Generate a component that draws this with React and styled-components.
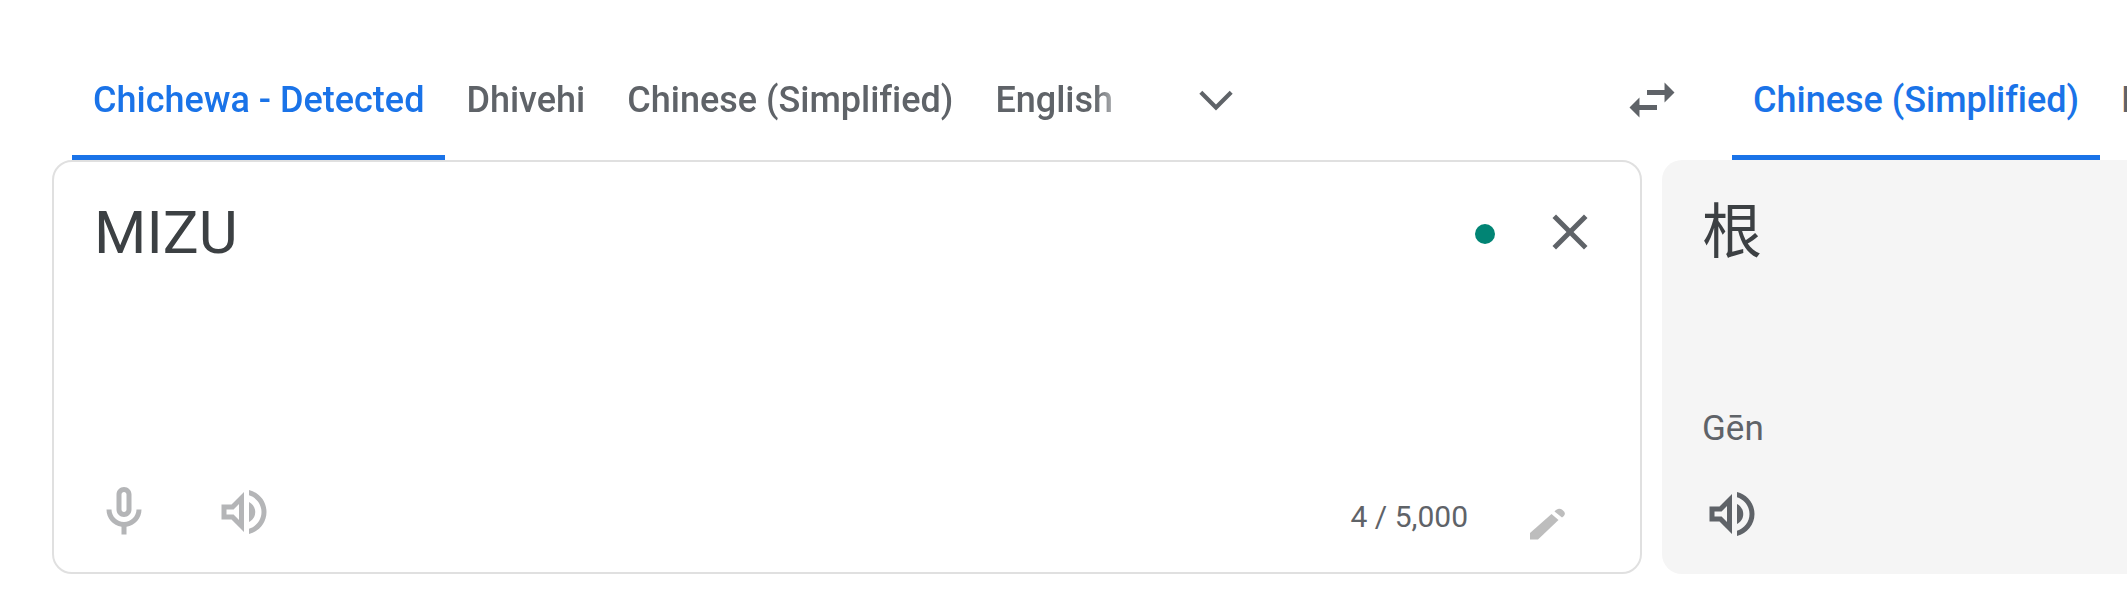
import React, { useState } from "react";
import styled, { createGlobalStyle } from "styled-components";

const GlobalStyle = createGlobalStyle`
  *, *::before, *::after { box-sizing: border-box; }
  body {
    margin: 0;
    background: #fff;
    color: #3c4043;
    font-family: Roboto, "Noto Sans CJK SC", sans-serif;
  }
  button, textarea { font: inherit; }
`;

const Page = styled.main`
  display: grid;
  grid-template-columns: minmax(0, 106fr) minmax(0, 31fr);
  column-gap: 20px;
  padding: 40px 0 36px 52px;
`;

const Column = styled.section`
  display: flex;
  flex-direction: column;
  min-width: 0;
`;

const LanguageBar = styled.div`
  display: flex;
  align-items: center;
  height: 120px;
  padding-left: ${(p) => (p.$wide ? 70 : 20)}px;
`;

const Tabs = styled.div`
  display: flex;
  align-self: stretch;
  overflow: hidden;
  ${(p) => p.$fade && "mask-image: linear-gradient(to left, transparent, #000 40px);"}
`;

const Tab = styled.button`
  flex: none;
  padding: 5px 21px 0;
  border: 0;
  border-bottom: 5px solid ${(p) => (p.$active ? "#1a73e8" : "transparent")};
  background: none;
  color: ${(p) => (p.$active ? "#1a73e8" : "#5f6368")};
  font-size: 36px;
  font-weight: 500;
  font-variant-ligatures: none;
  line-height: 50px;
  white-space: nowrap;
`;

const IconButton = styled.button`
  display: grid;
  place-items: center;
  flex: none;
  width: 60px;
  height: 60px;
  padding: 0;
  border: 0;
  background: none;
  color: #5f6368;
  &:disabled { color: #b4b5b7; }
`;

const MoreButton = styled(IconButton)`
  margin-left: 52px;
`;

const SwapButton = styled(IconButton)`
  margin-left: auto;
  margin-right: -40px;
`;

const Panel = styled.div`
  display: flex;
  flex-direction: column;
  height: 414px;
  padding: 31px 30px 30px 40px;
  border: 2px solid #e0e0e0;
  border-radius: 20px;
  background: #fff;
`;

const ResultPanel = styled(Panel)`
  padding-top: 33px;
  border: 0;
  border-radius: 20px 0 0 20px;
  background: #f5f5f5;
`;

const InputRow = styled.div`
  display: flex;
  flex: 1;
  align-items: flex-start;
`;

const SourceText = styled.textarea`
  flex: 1;
  min-width: 0;
  height: 80px;
  padding: 0;
  border: 0;
  outline: 0;
  resize: none;
  overflow: hidden;
  background: none;
  color: #3c4043;
  font-size: 60px;
  line-height: 80px;
`;

const StatusDot = styled.span`
  flex: none;
  width: 20px;
  height: 20px;
  margin: 31px 45px 0 0;
  border-radius: 50%;
  background: #018474;
`;

const ClearButton = styled(IconButton)`
  margin: 9px 10px 0 0;
`;

const Result = styled.p`
  margin: 0;
  font-size: 60px;
  line-height: 80px;
`;

const Romanization = styled.p`
  margin: auto 0 30px;
  color: #5f6368;
  font-size: 35px;
  line-height: 50px;
`;

const Toolbar = styled.div`
  display: flex;
  align-items: center;
  gap: 60px;
`;

const InputTools = styled.div`
  display: flex;
  align-items: flex-end;
  gap: 50px;
  margin: 0 32px 0 auto;
`;

const PencilButton = styled(IconButton)`
  place-items: end center;
`;

const Count = styled.span`
  color: #5f6368;
  font-size: 30px;
  line-height: 50px;
`;

const paths = {
  chevron: "M5.41 7.59 4 9l8 8 8-8-1.41-1.41L12 14.17z",
  swap: "M6.99 11 3 15l3.99 4v-3H14v-2H6.99zM21 9l-3.99-4v3H10v2h7.01v3z",
  close: "M19 6.41 17.59 5 12 10.59 6.41 5 5 6.41 10.59 12 5 17.59 6.41 19 12 13.41 17.59 19 19 17.59 13.41 12z",
  mic: "M12 14c1.66 0 3-1.34 3-3V5c0-1.66-1.34-3-3-3S9 3.34 9 5v6c0 1.66 1.34 3 3 3zm-1-9c0-.55.45-1 1-1s1 .45 1 1v6c0 .55-.45 1-1 1s-1-.45-1-1V5zm6 6c0 2.76-2.24 5-5 5s-5-2.24-5-5H5c0 3.53 2.61 6.43 6 6.92V21h2v-3.08c3.39-.49 6-3.39 6-6.92h-2z",
  volume: "M3 9v6h4l5 5V4L7 9H3zm7-.17v6.34L7.83 13H5v-2h2.83L10 8.83zM16.5 12c0-1.77-1.02-3.29-2.5-4.03v8.05c1.48-.73 2.5-2.25 2.5-4.02zM14 3.23v2.06c2.89.86 5 3.54 5 6.71s-2.11 5.85-5 6.71v2.06c4.01-.91 7-4.49 7-8.77s-2.99-7.86-7-8.77z",
};

function Icon({ name, size = 60 }) {
  return (
    <svg width={size} height={size} viewBox="0 0 24 24" fill="currentColor" fillRule="evenodd" aria-hidden="true">
      <path d={paths[name]} />
    </svg>
  );
}

function PencilIcon() {
  return (
    <svg width="36" height="34" viewBox="0 0 36 34" fill="#bdbdbd" aria-hidden="true">
      <path d="M0 25 21.5 6 28.500 12 8 31.500H0z" />
      <path d="M24.500 3.500C27 .5 30 0 32.500 2 35.500 4.500 36 6.500 32 9.500z" />
    </svg>
  );
}

export default function App() {
  const [text, setText] = useState("MIZU");
  return (
    <>
      <GlobalStyle />
      <Page>
        <Column>
          <LanguageBar>
            <Tabs role="tablist" $fade>
              <Tab role="tab" aria-selected $active>Chichewa - Detected</Tab>
              <Tab role="tab">Dhivehi</Tab>
              <Tab role="tab">Chinese (Simplified)</Tab>
              <Tab role="tab">English</Tab>
            </Tabs>
            <MoreButton aria-label="More source languages"><Icon name="chevron" size={50} /></MoreButton>
            <SwapButton aria-label="Swap languages"><Icon name="swap" /></SwapButton>
          </LanguageBar>
          <Panel>
            <InputRow>
              <SourceText aria-label="Source text" spellCheck={false} value={text} onChange={(e) => setText(e.target.value)} />
              <StatusDot />
              <ClearButton aria-label="Clear source text"><Icon name="close" /></ClearButton>
            </InputRow>
            <Toolbar>
              <IconButton disabled aria-label="Translate by voice"><Icon name="mic" /></IconButton>
              <IconButton disabled aria-label="Listen to source text"><Icon name="volume" /></IconButton>
              <InputTools>
                <Count>{text.length} / 5,000</Count>
                <PencilButton disabled aria-label="Handwriting input"><PencilIcon /></PencilButton>
              </InputTools>
            </Toolbar>
          </Panel>
        </Column>
        <Column>
          <LanguageBar $wide>
            <Tabs role="tablist">
              <Tab role="tab" aria-selected $active>Chinese (Simplified)</Tab>
              <Tab role="tab">English</Tab>
            </Tabs>
          </LanguageBar>
          <ResultPanel>
            <Result lang="zh-CN">根</Result>
            <Romanization>Gēn</Romanization>
            <Toolbar>
              <IconButton aria-label="Listen to translation"><Icon name="volume" /></IconButton>
            </Toolbar>
          </ResultPanel>
        </Column>
      </Page>
    </>
  );
}
